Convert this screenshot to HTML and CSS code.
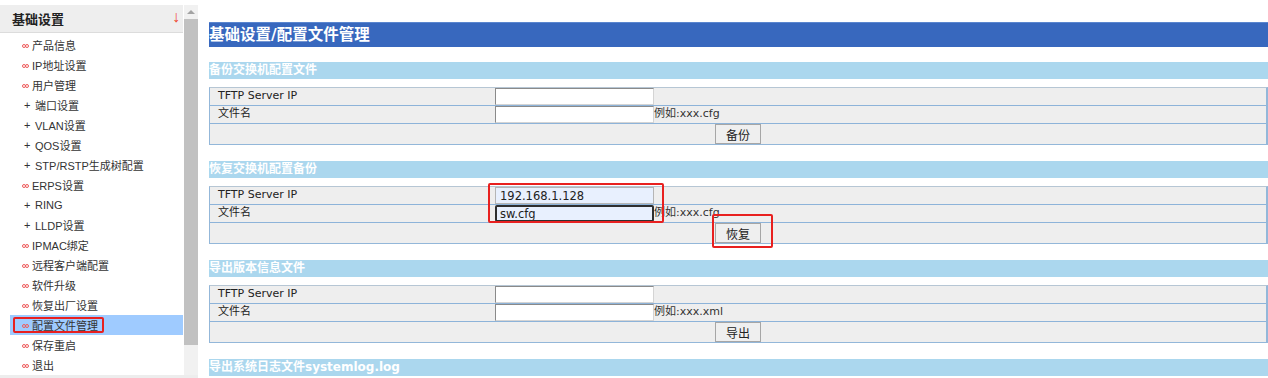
FILE: index.html
```html
<!DOCTYPE html>
<html lang="zh-CN">
<head>
  <meta charset="utf-8"/>
  <title>配置文件管理</title>
  <link rel="stylesheet" href="styles.css">
</head>
<body>
<div class="page">

  <aside class="sidebar">
    <div class="menu">
      <div class="menu-head">
        <span>基础设置</span>
        <span class="arrow">↓</span>
      </div>
      <ul class="menu-list">
        <li><span class="inf"></span>产品信息</li>
        <li><span class="inf"></span>IP地址设置</li>
        <li><span class="inf"></span>用户管理</li>
        <li><span class="plus">+</span>端口设置</li>
        <li><span class="plus">+</span>VLAN设置</li>
        <li><span class="plus">+</span>QOS设置</li>
        <li><span class="plus">+</span>STP/RSTP生成树配置</li>
        <li><span class="inf"></span>ERPS设置</li>
        <li><span class="plus">+</span>RING</li>
        <li><span class="plus">+</span>LLDP设置</li>
        <li><span class="inf"></span>IPMAC绑定</li>
        <li><span class="inf"></span>远程客户端配置</li>
        <li><span class="inf"></span>软件升级</li>
        <li><span class="inf"></span>恢复出厂设置</li>
        <li class="active"><span class="inf"></span>配置文件管理<span class="mark mark-menu"></span></li>
        <li><span class="inf"></span>保存重启</li>
        <li><span class="inf"></span>退出</li>
      </ul>
    </div>
    <div class="scrollbar">
      <div class="sb-up"></div>
      <div class="sb-thumb"></div>
    </div>
  </aside>

  <main class="content">
    <div class="title-bar">基础设置/配置文件管理</div>

    <section class="block">
      <h2 class="sec-head">备份交换机配置文件</h2>
      <div class="cfg-box">
        <div class="cfg-row">
          <div class="lbl">TFTP Server IP</div>
          <div class="val"><input class="txt" type="text"></div>
        </div>
        <div class="cfg-row">
          <div class="lbl">文件名</div>
          <div class="val"><input class="txt" type="text"><span class="hint">例如:xxx.cfg</span></div>
        </div>
        <div class="cfg-row act">
          <button class="btn">备份</button>
        </div>
      </div>
    </section>

    <section class="block">
      <h2 class="sec-head">恢复交换机配置备份</h2>
      <div class="cfg-box">
        <div class="cfg-row">
          <div class="lbl">TFTP Server IP</div>
          <div class="val"><input class="txt filled" type="text" value="192.168.1.128"></div>
        </div>
        <div class="cfg-row">
          <div class="lbl">文件名</div>
          <div class="val"><input class="txt filled focused" type="text" value="sw.cfg"><span class="hint">例如:xxx.cfg</span></div>
        </div>
        <div class="cfg-row act">
          <button class="btn">恢复</button>
        </div>
        <span class="mark mark-inputs"></span>
        <span class="mark mark-btn"></span>
      </div>
    </section>

    <section class="block">
      <h2 class="sec-head">导出版本信息文件</h2>
      <div class="cfg-box">
        <div class="cfg-row">
          <div class="lbl">TFTP Server IP</div>
          <div class="val"><input class="txt" type="text"></div>
        </div>
        <div class="cfg-row">
          <div class="lbl">文件名</div>
          <div class="val"><input class="txt" type="text"><span class="hint">例如:xxx.xml</span></div>
        </div>
        <div class="cfg-row act">
          <button class="btn">导出</button>
        </div>
      </div>
    </section>

    <section class="block">
      <h2 class="sec-head">导出系统日志文件systemlog.log</h2>
    </section>
  </main>

</div>
</body>
</html>
```

FILE: styles.css
```css
html, body {
  margin: 0;
  height: 100%;
  overflow: hidden;
  background: #fff;
}

body {
  font-family: "Liberation Sans", "Noto Sans CJK SC", sans-serif;
  color: #333;
}

.page {
  display: flex;
  align-items: flex-start;
}

/* left menu */
.sidebar {
  display: flex;
  width: 198px;
  height: 370px;
  margin-top: 5px;
  border-bottom: 3px solid #ededed;
}

.menu {
  width: 183px;
  margin-right: 1px;
}

.menu-head {
  display: flex;
  justify-content: space-between;
  align-items: center;
  height: 27px;
  padding: 0 3px 0 12px;
  background: #eeeeee;
  border-bottom: 1px solid #dcdcdc;
  font-size: 13px;
  font-weight: bold;
  color: #222;
}

.menu-head .arrow {
  color: #ee4a33;
  font-size: 16px;
  font-weight: normal;
  margin-top: -3px;
}

.menu-list {
  list-style: none;
  margin: 0;
  padding: 2px 0 0;
}

.menu-list li {
  position: relative;
  display: flex;
  align-items: center;
  height: 20px;
  margin-left: 10px;
  padding-left: 12px;
  font-size: 11px;
  color: #333;
}

.menu-list li.active {
  background: #9fcbff;
}

/* little red "infinity" bullet: two rings side by side */
.inf {
  display: flex;
  width: 10px;
  margin-top: 1px;
}

.inf::before,
.inf::after {
  content: "";
  width: 2px;
  height: 2px;
  border: 1px solid #ee5a5a;
  border-radius: 50%;
}

.inf::after {
  margin-left: -1px;
}

.plus {
  width: 11px;
  padding-left: 2px;
  font-size: 11px;
  color: #333;
}

.scrollbar {
  display: flex;
  flex-direction: column;
  width: 14px;
  background: #f1f1f1;
}

.sb-up {
  height: 14px;
  display: flex;
  justify-content: center;
  align-items: center;
}

.sb-up::before {
  content: "";
  border-left: 4px solid transparent;
  border-right: 4px solid transparent;
  border-bottom: 4px solid #a3a3a3;
}

.sb-thumb {
  height: 326px;
  background: #c1c1c1;
}

/* red annotation frames */
.mark {
  position: absolute;
  border: 2px solid #e8201f;
  border-radius: 2px;
}

.mark-menu {
  left: 3px;
  top: 2px;
  width: 87px;
  height: 12px;
}

.mark-inputs {
  left: 278px;
  top: -4px;
  width: 172px;
  height: 36px;
}

.mark-btn {
  left: 502px;
  top: 27px;
  width: 57px;
  height: 30px;
}

/* right content */
.content {
  flex: 1;
  margin: 22px 0 0 11px;
}

.title-bar {
  height: 25px;
  line-height: 25px;
  background: #3868be;
  border-top: 1px solid #5a86cf;
  box-sizing: border-box;
  color: #fff;
  font-family: "DejaVu Sans", "Noto Sans CJK SC", sans-serif;
  font-size: 15.5px;
  font-weight: bold;
}

.block {
  margin-top: 15px;
}

.block + .block {
  margin-top: 16px;
}

.sec-head {
  margin: 0 0 8px;
  height: 17px;
  line-height: 17px;
  background: #abd7ee;
  color: #fff;
  font-family: "DejaVu Sans", "Noto Sans CJK SC", sans-serif;
  font-size: 12px;
  font-weight: bold;
}

.cfg-box {
  position: relative;
  border: 1px solid #93b7d9;
  border-top-color: #b6c6d4;
  border-right-width: 2px;
  background: #eeeeee;
  font-family: "DejaVu Sans", "Noto Sans CJK SC", sans-serif;
  font-size: 11px;
  color: #222;
}

.cfg-row {
  display: flex;
  height: 17px;
  border-bottom: 1px solid #8db3d9;
}

.cfg-row.act {
  height: 20px;
  border-bottom: none;
  justify-content: center;
}

.lbl {
  width: 277px;
  padding-left: 8px;
  line-height: 15px;
}

.val {
  display: flex;
  align-items: flex-start;
}

.txt {
  box-sizing: border-box;
  width: 159px;
  height: 17px;
  margin: 0;
  padding: 0 4px;
  border: 1px solid;
  border-color: #8a8a8a #d4d4d4 #d4d4d4 #8a8a8a;
  background: #fff;
  font-family: "DejaVu Sans", sans-serif;
  font-size: 11.5px;
  color: #222;
  outline: none;
}

.txt.filled {
  background: #e8f0fe;
  border-color: #b5b5b5;
}

.txt.focused {
  border: 2px solid #2f2f2f;
  border-radius: 2px;
  padding: 0 3px;
}

.hint {
  line-height: 15px;
  color: #333;
}

.btn {
  width: 46px;
  height: 20px;
  padding: 0;
  border: 1px solid #a6a6a6;
  background: #efefef;
  font-family: "Liberation Sans", "Noto Sans CJK SC", sans-serif;
  font-size: 12px;
  color: #222;
}
```
